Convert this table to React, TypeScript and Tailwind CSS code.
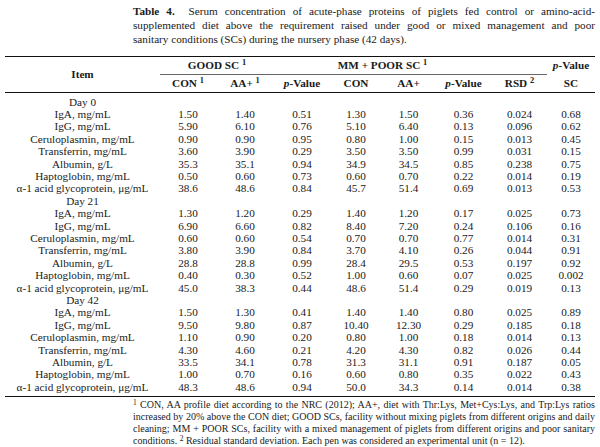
const serif = { fontFamily: '"Liberation Serif", "Times New Roman", serif' };

type Row = [string, string, string, string, string, string, string, string, string];

const days: { label: string; rows: Row[] }[] = [
  {
    label: "Day 0",
    rows: [
      ["IgA, mg/mL", "1.50", "1.40", "0.51", "1.30", "1.50", "0.36", "0.024", "0.68"],
      ["IgG, mg/mL", "5.90", "6.10", "0.76", "5.10", "6.40", "0.13", "0.096", "0.62"],
      ["Ceruloplasmin, mg/mL", "0.90", "0.90", "0.95", "0.80", "1.00", "0.15", "0.013", "0.45"],
      ["Transferrin, mg/mL", "3.60", "3.90", "0.29", "3.50", "3.50", "0.99", "0.031", "0.15"],
      ["Albumin, g/L", "35.3", "35.1", "0.94", "34.9", "34.5", "0.85", "0.238", "0.75"],
      ["Haptoglobin, mg/mL", "0.50", "0.60", "0.73", "0.60", "0.70", "0.22", "0.014", "0.19"],
      ["α-1 acid glycoprotein, μg/mL", "38.6", "48.6", "0.84", "45.7", "51.4", "0.69", "0.013", "0.53"],
    ],
  },
  {
    label: "Day 21",
    rows: [
      ["IgA, mg/mL", "1.30", "1.20", "0.29", "1.40", "1.20", "0.17", "0.025", "0.73"],
      ["IgG, mg/mL", "6.90", "6.60", "0.82", "8.40", "7.20", "0.24", "0.106", "0.16"],
      ["Ceruloplasmin, mg/mL", "0.60", "0.60", "0.54", "0.70", "0.70", "0.77", "0.014", "0.31"],
      ["Transferrin, mg/mL", "3.80", "3.90", "0.84", "3.70", "4.10", "0.26", "0.044", "0.91"],
      ["Albumin, g/L", "28.8", "28.8", "0.99", "28.4", "29.5", "0.53", "0.197", "0.92"],
      ["Haptoglobin, mg/mL", "0.40", "0.30", "0.52", "1.00", "0.60", "0.07", "0.025", "0.002"],
      ["α-1 acid glycoprotein, μg/mL", "45.0", "38.3", "0.44", "48.6", "51.4", "0.29", "0.019", "0.13"],
    ],
  },
  {
    label: "Day 42",
    rows: [
      ["IgA, mg/mL", "1.50", "1.30", "0.41", "1.40", "1.40", "0.80", "0.025", "0.89"],
      ["IgG, mg/mL", "9.50", "9.80", "0.87", "10.40", "12.30", "0.29", "0.185", "0.18"],
      ["Ceruloplasmin, mg/mL", "1.10", "0.90", "0.20", "0.80", "1.00", "0.18", "0.014", "0.13"],
      ["Transferrin, mg/mL", "4.30", "4.60", "0.21", "4.20", "4.30", "0.82", "0.026", "0.44"],
      ["Albumin, g/L", "33.5", "34.1", "0.78", "31.3", "31.1", "0.91", "0.187", "0.05"],
      ["Haptoglobin, mg/mL", "1.00", "0.70", "0.16", "0.60", "0.80", "0.35", "0.022", "0.43"],
      ["α-1 acid glycoprotein, μg/mL", "48.3", "48.6", "0.94", "50.0", "34.3", "0.14", "0.014", "0.38"],
    ],
  },
];

const Line = ({ children, last }: { children: React.ReactNode; last?: boolean }) => (
  <div className={last ? "whitespace-nowrap text-left" : "whitespace-nowrap text-justify [text-align-last:justify]"}>
    {children}
  </div>
);

const PVal = () => (
  <>
    <i>p</i>-Value
  </>
);

export default function App() {
  return (
    <div className="h-[447px] w-[600px] overflow-hidden bg-white text-[#1a1a1a]" style={serif}>
      {/* caption */}
      <div className="ml-[133px] mr-[5px] pt-[4px] text-[11.2px] leading-[14px]">
        <Line>
          <b>Table 4.</b>&nbsp; Serum concentration of acute-phase proteins of piglets fed control or amino-acid-
        </Line>
        <Line>
          supplemented diet above the requirement raised under good or mixed management and poor
        </Line>
        <Line last>sanitary conditions (SCs) during the nursery phase (42 days).</Line>
      </div>

      <table className="mx-[5px] mt-[10px] w-[590px] table-fixed border-collapse text-center text-[11.2px]">
        <colgroup>
          <col className="w-[155px]" />
          <col className="w-[56px]" />
          <col className="w-[58px]" />
          <col className="w-[56px]" />
          <col className="w-[52px]" />
          <col className="w-[53px]" />
          <col className="w-[57px]" />
          <col className="w-[55px]" />
          <col className="w-[48px]" />
        </colgroup>
        <thead className="font-bold">
          <tr className="h-[18px] border-t-[1.5px] border-[#111]">
            <th rowSpan={2} className="border-b-[1.5px] border-[#111] p-0 align-middle">
              Item
            </th>
            <th colSpan={2} className="border-b border-[#666] p-0">
              GOOD SC <sup>1</sup>
            </th>
            <th className="border-b border-[#666] p-0"></th>
            <th colSpan={2} className="border-b border-[#666] p-0">
              MM + POOR SC <sup>1</sup>
            </th>
            <th className="border-b border-[#666] p-0"></th>
            <th className="border-b border-[#666] p-0"></th>
            <th className="p-0">
              <PVal />
            </th>
          </tr>
          <tr className="h-[18px] border-b-[1.5px] border-[#111]">
            <th className="p-0">
              CON <sup>1</sup>
            </th>
            <th className="p-0">
              AA+ <sup>1</sup>
            </th>
            <th className="p-0">
              <PVal />
            </th>
            <th className="p-0">CON</th>
            <th className="p-0">AA+</th>
            <th className="p-0">
              <PVal />
            </th>
            <th className="p-0">
              RSD <sup>2</sup>
            </th>
            <th className="p-0">SC</th>
          </tr>
        </thead>
        <tbody className="leading-[12px]">
          <tr className="h-[3px]">
            <td colSpan={9} className="p-0"></td>
          </tr>
          {days.map((d) => (
            <>
              <tr key={d.label} className="h-[12.4px]">
                <td className="p-0">{d.label}</td>
                <td colSpan={8} className="p-0"></td>
              </tr>
              {d.rows.map((r, i) => (
                <tr key={d.label + i} className="h-[12.4px]">
                  {r.map((c, j) => (
                    <td key={j} className="whitespace-nowrap p-0">
                      {c}
                    </td>
                  ))}
                </tr>
              ))}
            </>
          ))}
          <tr className="h-[4px] border-b-[1.5px] border-[#111]">
            <td colSpan={9} className="p-0"></td>
          </tr>
        </tbody>
      </table>

      {/* footnotes */}
      <div className="ml-[133px] mr-[5px] mt-[2px] text-[10px] leading-[12px]">
        <Line>
          <sup>1</sup> CON, AA profile diet according to the NRC (2012); AA+, diet with Thr:Lys, Met+Cys:Lys, and Trp:Lys ratios
        </Line>
        <Line>
          increased by 20% above the CON diet; GOOD SCs, facility without mixing piglets from different origins and daily
        </Line>
        <Line>
          cleaning; MM + POOR SCs, facility with a mixed management of piglets from different origins and poor sanitary
        </Line>
        <Line last>
          conditions. <sup>2</sup> Residual standard deviation. Each pen was considered an experimental unit (n = 12).
        </Line>
      </div>
    </div>
  );
}
